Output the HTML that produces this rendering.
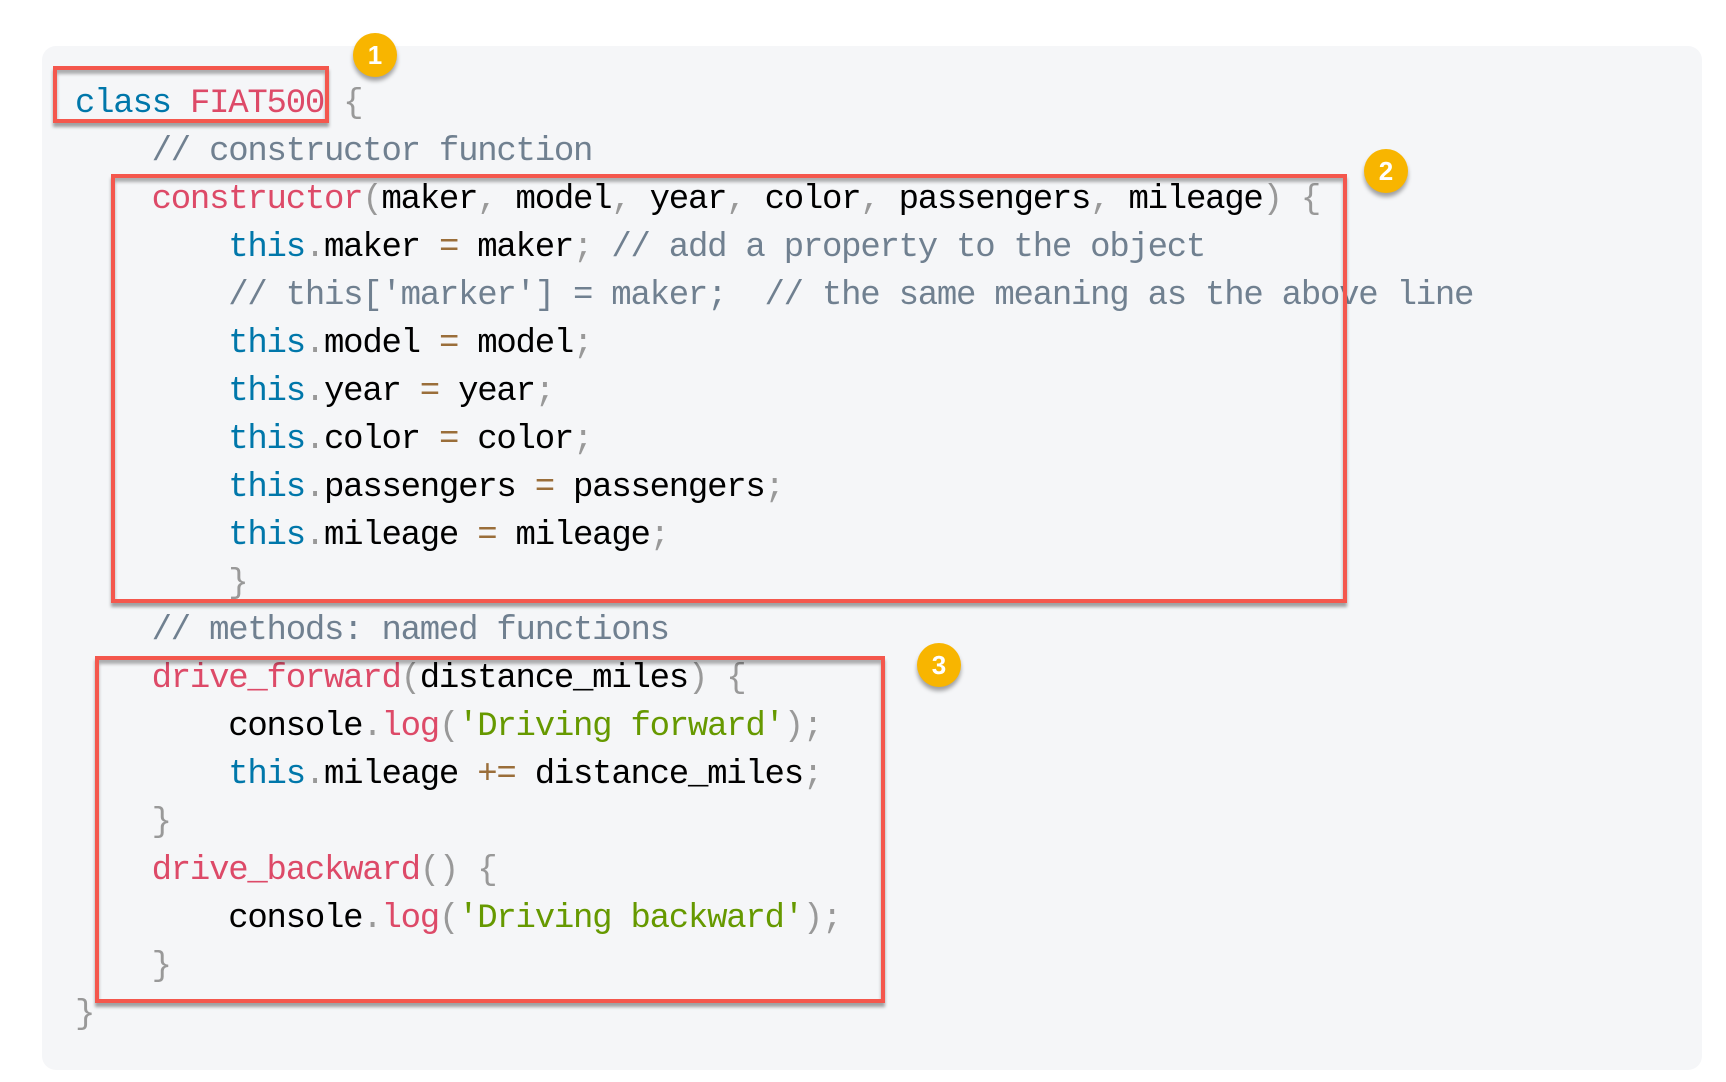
<!DOCTYPE html>
<html><head><meta charset="utf-8"><style>
html,body{margin:0;padding:0;background:#fff;width:1726px;height:1082px;overflow:hidden;position:relative}
.card{position:absolute;left:42px;top:46px;width:1660px;height:1024px;background:#f5f6f8;border-radius:14px}
pre{position:absolute;left:75px;top:81px;margin:0;font-family:"Liberation Mono",monospace;font-size:34px;letter-spacing:-1.25px;line-height:47.95px;color:#000;white-space:pre}
.k{color:#0077aa}.f{color:#dd4a68}.c{color:#708090}.p{color:#999}.o{color:#9a6e3a}.s{color:#669900}
.box{position:absolute;border:4.5px solid #f4574d;box-shadow:0 4px 3px rgba(0,0,0,0.35), inset 0 4px 3px rgba(0,0,0,0.3)}
.b{position:absolute;width:44px;height:44px;border-radius:50%;background:#f8b500;color:#fff;font:600 26px "Liberation Sans",sans-serif;text-align:center;line-height:44px;box-shadow:0 4px 4px rgba(0,0,0,0.35)}
</style></head><body>
<div class="card"></div>
<pre><span class="k">class</span> <span class="f">FIAT500</span> <span class="p">{</span>
    <span class="c">// constructor function</span>
    <span class="f">constructor</span><span class="p">(</span>maker<span class="p">,</span> model<span class="p">,</span> year<span class="p">,</span> color<span class="p">,</span> passengers<span class="p">,</span> mileage<span class="p">)</span> <span class="p">{</span>
        <span class="k">this</span><span class="p">.</span>maker <span class="o">=</span> maker<span class="p">;</span> <span class="c">// add a property to the object</span>
        <span class="c">// this['marker'] = maker;  // the same meaning as the above line</span>
        <span class="k">this</span><span class="p">.</span>model <span class="o">=</span> model<span class="p">;</span>
        <span class="k">this</span><span class="p">.</span>year <span class="o">=</span> year<span class="p">;</span>
        <span class="k">this</span><span class="p">.</span>color <span class="o">=</span> color<span class="p">;</span>
        <span class="k">this</span><span class="p">.</span>passengers <span class="o">=</span> passengers<span class="p">;</span>
        <span class="k">this</span><span class="p">.</span>mileage <span class="o">=</span> mileage<span class="p">;</span>
        <span class="p">}</span>
    <span class="c">// methods: named functions</span>
    <span class="f">drive_forward</span><span class="p">(</span>distance_miles<span class="p">)</span> <span class="p">{</span>
        console<span class="p">.</span><span class="f">log</span><span class="p">(</span><span class="s">'Driving forward'</span><span class="p">);</span>
        <span class="k">this</span><span class="p">.</span>mileage <span class="o">+=</span> distance_miles<span class="p">;</span>
    <span class="p">}</span>
    <span class="f">drive_backward</span><span class="p">()</span> <span class="p">{</span>
        console<span class="p">.</span><span class="f">log</span><span class="p">(</span><span class="s">'Driving backward'</span><span class="p">);</span>
    <span class="p">}</span>
<span class="p">}</span></pre>
<div class="box" style="left:53px;top:66px;width:268px;height:49px"></div>
<div class="box" style="left:111px;top:174px;width:1228px;height:421px"></div>
<div class="box" style="left:95px;top:656px;width:782px;height:339px"></div>
<div class="b" style="left:353px;top:33px">1</div>
<div class="b" style="left:1364px;top:149px">2</div>
<div class="b" style="left:917px;top:643px">3</div>
</body></html>
